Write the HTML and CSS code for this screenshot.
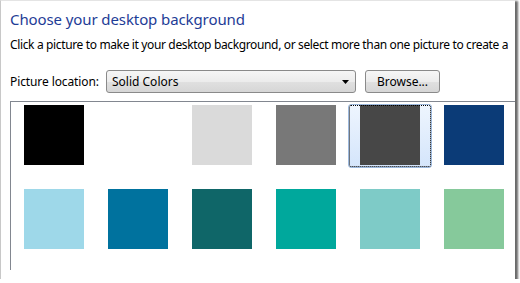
FILE: index.html
```html
<!DOCTYPE html>
<html lang="en">
<head>
  <meta charset="UTF-8">
  <title>Choose your desktop background</title>
  <link rel="stylesheet" href="styles.css">
</head>
<body>
  <div class="frame">
    <div class="panel">
      <h1 class="title">Choose your desktop background</h1>
      <p class="hint">Click a picture to make it your desktop background, or select more than one picture to create a</p>

      <div class="location">
        <span class="label">Picture location:</span>
        <div class="combo">
          <span>Solid Colors</span>
          <svg class="arrow" width="7" height="4" viewBox="0 0 7 4"><path d="M0 0h7L3.5 4z" fill="#000"/></svg>
        </div>
        <button class="btn">Browse...</button>
      </div>

      <div class="list">
        <div class="cell"><div class="swatch" style="background:#000000"></div></div>
        <div class="cell"><div class="swatch" style="background:#ffffff"></div></div>
        <div class="cell"><div class="swatch" style="background:#dadada"></div></div>
        <div class="cell"><div class="swatch" style="background:#787878"></div></div>
        <div class="cell selected"><div class="swatch" style="background:#474747"></div></div>
        <div class="cell"><div class="swatch" style="background:#0b3b77"></div></div>
        <div class="cell"><div class="swatch" style="background:#9ed8e9"></div></div>
        <div class="cell"><div class="swatch" style="background:#00729e"></div></div>
        <div class="cell"><div class="swatch" style="background:#0f6668"></div></div>
        <div class="cell"><div class="swatch" style="background:#00a89c"></div></div>
        <div class="cell"><div class="swatch" style="background:#7ecbc7"></div></div>
        <div class="cell"><div class="swatch" style="background:#86c99b"></div></div>
      </div>
    </div>
  </div>
</body>
</html>
```

FILE: styles.css
```css
body { margin: 0; background: #fff; font-family: "Noto Sans", "Open Sans", sans-serif; color: #000; }

.frame { width: 515px; height: 279px; box-sizing: border-box; border-left: 1px solid #c8c8c8; border-top: 1px solid #e4e4e4; box-shadow: 2px 2px 2px 1px #6a6a6a; background: #fff; overflow: hidden; }
.panel { height: 269px; overflow: hidden; padding-left: 9px; }

.title { margin: 0; padding-top: 7px; font-size: 15px; font-weight: normal; line-height: 22px; color: #1e3c96; letter-spacing: -0.1px; }
.hint { margin: 7px 0 0; font-size: 12px; line-height: 16px; white-space: nowrap; letter-spacing: -0.36px; }

.location { display: flex; align-items: center; margin-top: 17px; height: 23px; }
.label { font-size: 12px; width: 96px; letter-spacing: -0.1px; }
.combo { display: flex; align-items: center; justify-content: space-between; width: 250px; height: 23px; box-sizing: border-box; padding: 0 6px 0 5px; border: 1px solid #8a8a8a; border-radius: 3px; background: linear-gradient(#f6f6f6, #ececec 50%, #e0e0e0 51%, #d6d6d6); font-size: 12px; }
.btn { margin-left: 9px; width: 75px; height: 23px; border: 1px solid #8a8a8a; border-radius: 3px; background: linear-gradient(#f6f6f6, #ececec 50%, #e0e0e0 51%, #d6d6d6); font-family: inherit; font-size: 12px; padding: 0; color: #000; }

.list { margin-top: 8px; width: 560px; height: 200px; border-top: 1px solid #828790; border-left: 1px solid #828790; padding: 2px 0 0 1px; display: grid; grid-template-columns: repeat(6, 84px); grid-auto-rows: 64px; row-gap: 20px; }
.cell { box-sizing: border-box; padding: 1px 12px 0; border: 1px solid transparent; }
.cell .swatch { width: 60px; height: 60px; margin-left: -1px; margin-top: -1px; }
.cell.selected { border-color: #9cb8dc; border-radius: 3px; background: linear-gradient(#eef5fe, #d4e5fb); outline: 1px dotted #000; outline-offset: -2px; }
```
